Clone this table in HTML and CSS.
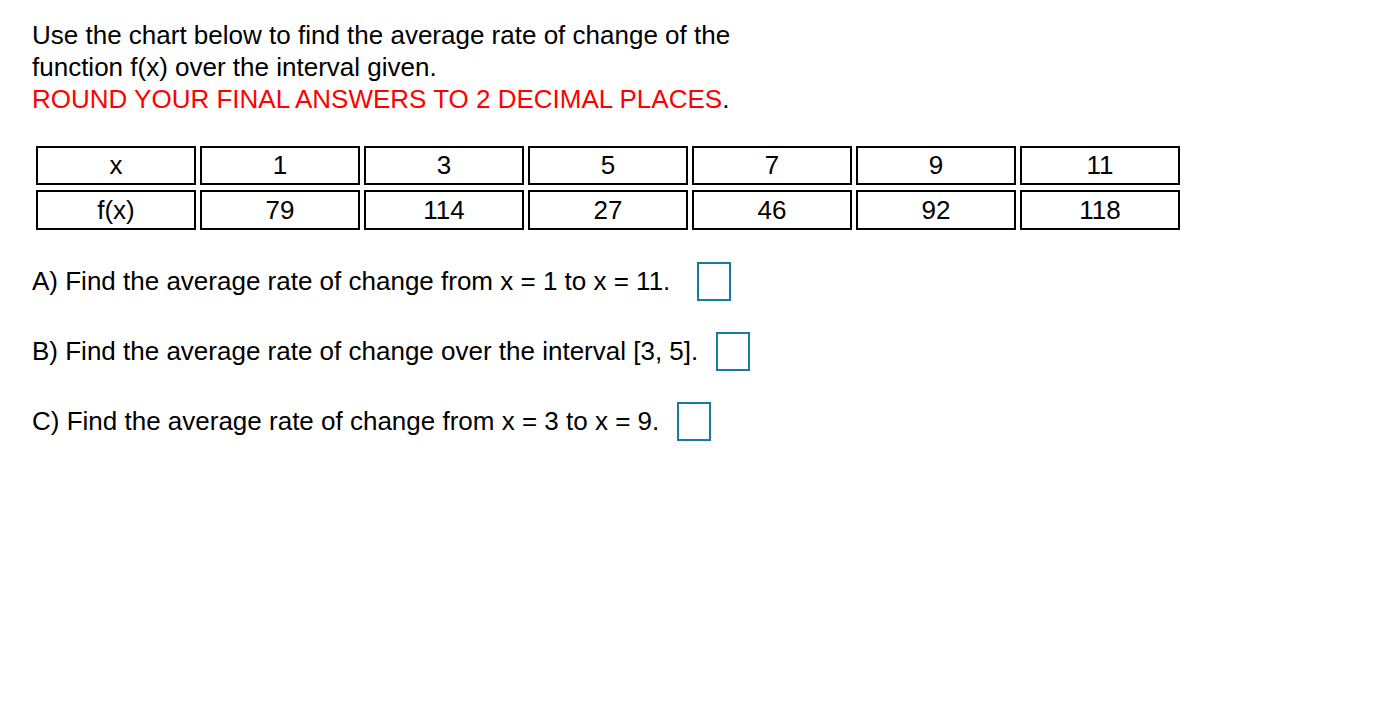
FILE: index.html
```html
<!DOCTYPE html>
<html>
<head>
<meta charset="utf-8">
<link rel="stylesheet" href="styles.css">
</head>
<body>
<div class="page">
  <div class="intro">
    <p>Use the chart below to find the average rate of change of the</p>
    <p>function f(x) over the interval given.</p>
    <p class="warn">ROUND YOUR FINAL ANSWERS TO 2 DECIMAL PLACES<span class="dot">.</span></p>
  </div>
  <table class="chart">
    <tr class="r1">
      <td>x</td><td>1</td><td>3</td><td>5</td><td>7</td><td>9</td><td>11</td>
    </tr>
    <tr class="r2">
      <td>f(x)</td><td>79</td><td>114</td><td>27</td><td>46</td><td>92</td><td>118</td>
    </tr>
  </table>
  <div class="questions">
    <div class="q"><span>A) Find the average rate of change from x = 1 to x = 11.</span><span class="box qa"></span></div>
    <div class="q"><span>B) Find the average rate of change over the interval [3, 5].</span><span class="box"></span></div>
    <div class="q"><span>C) Find the average rate of change from x = 3 to x = 9.</span><span class="box"></span></div>
  </div>
</div>
</body>
</html>
```

FILE: styles.css
```css
html, body {
  margin: 0;
  background: #fff;
}
body {
  font-family: "Liberation Sans", Arial, sans-serif;
  font-size: 26px;
  color: #000;
}
.page {
  padding: 19px 32px;
}
.intro p {
  margin: 0;
  line-height: 32px;
}
.warn {
  color: #ff0000;
}
.warn .dot {
  color: #000;
}
.chart {
  margin-top: 26px;
  border-collapse: separate;
  border-spacing: 4px 5px;
  margin-left: 0;
  font-size: 26px;
}
.chart td {
  width: 156px;
  border: 2px solid #000;
  padding: 0;
  text-align: center;
  line-height: 35px;
}
.chart .r2 td {
  line-height: 36px;
}
.questions {
  margin-top: 27px;
  display: flex;
  flex-direction: column;
  gap: 31px;
}
.q {
  display: flex;
  align-items: center;
  gap: 18px;
  height: 39px;
}
.box {
  display: inline-block;
  width: 30px;
  height: 35px;
  border: 2px solid #187b9c;
}
.box.qa {
  margin-left: 9px;
}
```
